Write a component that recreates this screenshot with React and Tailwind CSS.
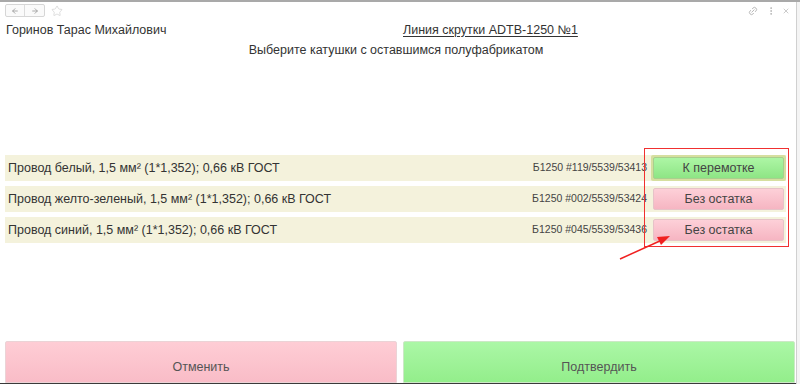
import { Star, Link2, MoreVertical, X, ArrowLeft, ArrowRight } from 'lucide-react';

const rows = [
  { name: 'Провод белый, 1,5 мм² (1*1,352); 0,66 кВ ГОСТ', code: 'Б1250 #119/5539/53413', label: 'К перемотке', ok: true },
  { name: 'Провод желто-зеленый, 1,5 мм² (1*1,352); 0,66 кВ ГОСТ', code: 'Б1250 #002/5539/53424', label: 'Без остатка', ok: false },
  { name: 'Провод синий, 1,5 мм² (1*1,352); 0,66 кВ ГОСТ', code: 'Б1250 #045/5539/53436', label: 'Без остатка', ok: false },
];

export default function App() {
  return (
    <div className="relative w-[800px] h-[384px] overflow-hidden bg-white border-t-2 border-[#a9a9a9] font-['Liberation_Sans',Arial,sans-serif] text-[#333]">
      <div className="flex h-full">
        <div className="flex-1 flex flex-col">
          {/* toolbar */}
          <div className="flex items-center h-[16px] px-[5px] pt-[1px]">
            <div className="flex h-[13px] border border-[#d6d6d6] rounded-[2px] bg-[#fafafa]">
              <div className="w-[19px] flex items-center justify-center border-r border-[#dcdcdc] text-[#9a9a9a]">
                <ArrowLeft size={8} strokeWidth={2.5} />
              </div>
              <div className="w-[19px] flex items-center justify-center text-[#9a9a9a]">
                <ArrowRight size={8} strokeWidth={2.5} />
              </div>
            </div>
            <Star size={12} strokeWidth={1.2} className="ml-[6px] text-[#c8c8c8]" />
            <div className="flex-1" />
            <Link2 size={10} className="text-[#b0b0b0] -rotate-45 mr-[8px]" />
            <MoreVertical size={10} className="text-[#b0b0b0] mr-[6px]" />
            <X size={8} strokeWidth={2} className="text-[#b0b0b0] mr-[1px]" />
          </div>

          {/* header */}
          <div className="flex items-center h-[20px] mt-[2px] text-[12.5px] text-[#333]">
            <div className="w-[397px] pl-[6px]">Горинов Тарас Михайлович</div>
            <div className="pl-[6px] underline underline-offset-2">Линия скрутки ADTB-1250 №1</div>
          </div>
          <div className="h-[20px] flex items-center justify-center text-[12.5px] text-[#333] pr-[4px]">
            Выберите катушки с оставшимся полуфабрикатом
          </div>

          {/* rows */}
          <div className="flex flex-col gap-[5px] mt-[95px] pl-[5px] pr-[10px]">
            {rows.map((r) => (
              <div key={r.code} className="flex items-center h-[26px] bg-[#f4f2dc]">
                <div className="pl-[3px] text-[12.5px] text-[#333] whitespace-nowrap">{r.name}</div>
                <div className="flex-1 text-right text-[10.5px] text-[#444] whitespace-nowrap">{r.code}</div>
                <div className={`ml-[4px] p-[2px] rounded-[2px] ${r.ok ? 'bg-[#d6df9f]' : ''}`}>
                  <div
                    className={`w-[131px] h-[22px] flex items-center justify-center text-[12.5px] text-[#444] rounded-[2px] border ${
                      r.ok
                        ? 'bg-gradient-to-b from-[#adf6a5] to-[#8ee585] border-[#a9cf8e]'
                        : 'bg-gradient-to-b from-[#fdd0d8] to-[#f6b5c2] border-[#e6c3c8]'
                    }`}
                  >
                    {r.label}
                  </div>
                </div>
              </div>
            ))}
          </div>

          <div className="flex-1" />

          {/* bottom buttons */}
          <div className="flex gap-[6px] pl-[5px] pr-[1px] h-[42px]">
            <div className="flex-1 flex items-center justify-center pt-[10px] text-[12.5px] text-[#555] bg-gradient-to-b from-[#fecdd5] to-[#f9bcc7] border border-[#ebd3d6] rounded-t-[2px]">
              Отменить
            </div>
            <div className="flex-1 flex items-center justify-center pt-[10px] text-[12.5px] text-[#555] bg-gradient-to-b from-[#abf7a6] to-[#93ee8b] border border-[#cce8c6] rounded-t-[2px]">
              Подтвердить
            </div>
          </div>
          <div className="h-[1px] bg-[#3a3a3a]" />
        </div>
        {/* scrollbar edge */}
        <div className="w-[4px] border-l border-[#d0d0d0] bg-[#f4f4f4]" />
      </div>

      {/* red annotation */}
      <div className="absolute left-[644px] top-[146px] w-[145px] h-[99px] border-[1.5px] border-[#f03030]" />
      <svg className="absolute left-0 top-0" width="800" height="384">
        <line x1="620" y1="257" x2="662" y2="238" stroke="#f02020" strokeWidth="1.5" />
        <polygon points="670,234 657,235 661,243" fill="#f02020" />
      </svg>
    </div>
  );
}
